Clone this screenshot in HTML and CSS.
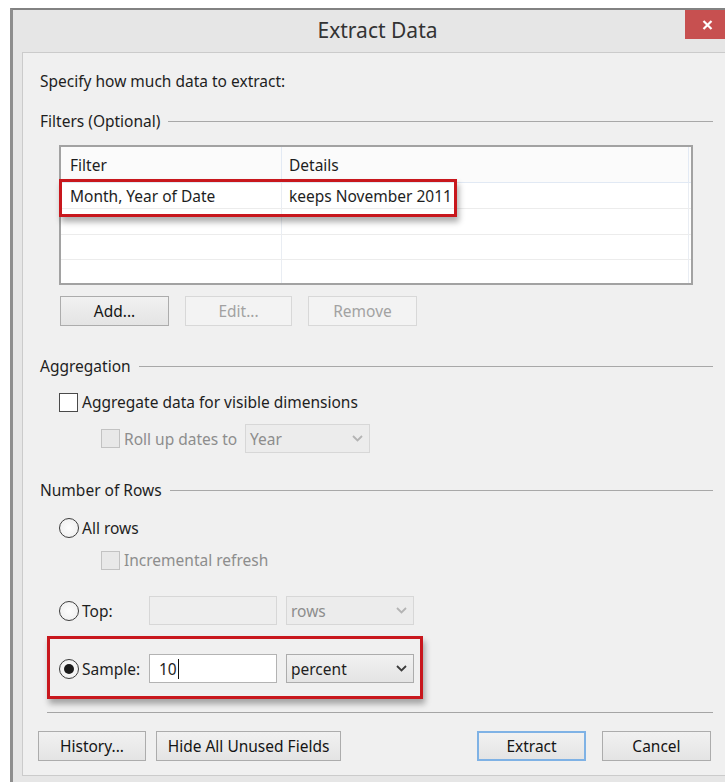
FILE: index.html
```html
<!DOCTYPE html>
<html lang="en">
<head>
<meta charset="utf-8">
<title>Extract Data</title>
<link rel="stylesheet" href="styles.css">
</head>
<body>
<div class="window">
  <div class="titlebar">
    <span class="title-spacer"></span>
    <div class="title">Extract Data</div>
    <button class="close" aria-label="Close">
      <svg width="11" height="10" viewBox="0 0 11 10"><path d="M1.5 1 L9.5 9 M9.5 1 L1.5 9" stroke="#fff" stroke-width="2.2" fill="none"/></svg>
    </button>
  </div>

  <div class="client">
    <p class="intro">Specify how much data to extract:</p>

    <div class="group-head"><span>Filters (Optional)</span><span class="rule"></span></div>

    <div class="filter-table">
      <div class="ft-grid">
        <div class="ft-head">Filter</div>
        <div class="ft-head">Details</div>
        <div class="ft-head ft-tail"></div>

        <div class="ft-cell">Month, Year of Date</div>
        <div class="ft-cell">keeps November 2011</div>
        <div class="ft-cell ft-tail"></div>

        <div class="ft-cell"></div><div class="ft-cell"></div><div class="ft-cell ft-tail"></div>
        <div class="ft-cell short"></div><div class="ft-cell short"></div><div class="ft-cell ft-tail short"></div>
        <div class="ft-cell last"></div><div class="ft-cell last"></div><div class="ft-cell ft-tail last"></div>
      </div>
      <div class="callout row-callout"></div>
    </div>

    <div class="filter-buttons">
      <button class="btn">Add...</button>
      <button class="btn edit" disabled>Edit...</button>
      <button class="btn" disabled>Remove</button>
    </div>

    <div class="group-head agg-head"><span>Aggregation</span><span class="rule"></span></div>

    <label class="check-row">
      <span class="checkbox"></span>
      <span>Aggregate data for visible dimensions</span>
    </label>

    <div class="rollup-row">
      <label class="rollup-label disabled">
        <span class="checkbox off"></span>
        <span>Roll up dates to</span>
      </label>
      <div class="select off year-select">
        <span>Year</span>
        <svg width="11" height="7" viewBox="0 0 11 7"><path d="M1 1 L5.5 5.5 L10 1" fill="none" stroke="#b4b4b4" stroke-width="1.8"/></svg>
      </div>
    </div>

    <div class="group-head rows-head"><span>Number of Rows</span><span class="rule"></span></div>

    <label class="radio-row all-rows">
      <span class="radio"></span>
      <span>All rows</span>
    </label>

    <label class="check-row sub disabled">
      <span class="checkbox off"></span>
      <span>Incremental refresh</span>
    </label>

    <div class="field-row top-row">
      <label class="radio-label">
        <span class="radio"></span>
        <span>Top:</span>
      </label>
      <div class="textbox off"></div>
      <div class="select off">
        <span>rows</span>
        <svg width="11" height="7" viewBox="0 0 11 7"><path d="M1 1 L5.5 5.5 L10 1" fill="none" stroke="#b4b4b4" stroke-width="1.8"/></svg>
      </div>
    </div>

    <div class="callout sample-box">
      <div class="field-row">
        <label class="radio-label">
          <span class="radio on"></span>
          <span>Sample:</span>
        </label>
        <div class="textbox"><span>10</span><span class="caret"></span></div>
        <div class="select">
          <span>percent</span>
          <svg width="11" height="7" viewBox="0 0 11 7"><path d="M1 1 L5.5 5.5 L10 1" fill="none" stroke="#3c3c3c" stroke-width="1.8"/></svg>
        </div>
      </div>
    </div>

    <div class="separator"></div>

    <div class="footer">
      <div class="footer-left">
        <button class="btn history">History...</button>
        <button class="btn hide-unused">Hide All Unused Fields</button>
      </div>
      <div class="footer-right">
        <button class="btn default">Extract</button>
        <button class="btn">Cancel</button>
      </div>
    </div>
  </div>
</div>
</body>
</html>
```

FILE: styles.css
```css
* { box-sizing: border-box; }

html, body {
  margin: 0;
  background: #ffffff;
  overflow: hidden;
}

body {
  width: 725px;
  height: 782px;
  font-family: "Noto Sans", "Open Sans", sans-serif;
  font-size: 15.5px;
  color: #1e1e1e;
}

button {
  font: inherit;
  color: inherit;
}

/* window frame */
.window {
  margin: 8px 0 0 10px;
  width: 732px;
  height: 800px;
  padding: 0 9px;
  background: #e6e6e6;
  border-top: 2px solid #828282;
  border-left: 3px solid #8e8e8e;
}

.titlebar {
  margin: 0 -9px;
  height: 42px;
  display: grid;
  grid-template-columns: 1fr auto 1fr;
}

.title {
  align-self: center;
  font-size: 21px;
  color: #333;
  padding-bottom: 2px;
}

.close {
  justify-self: end;
  width: 44px;
  height: 29px;
  margin-right: 13px;
  border: 0;
  padding: 0;
  background: #c75050;
  display: flex;
  align-items: center;
  justify-content: center;
}

/* client area */
.client {
  width: 708px;
  background: #f0f0f0;
  border: 1px solid #cbcbcb;
  border-right: 0;
  padding: 0 17px 14px;
}

.intro {
  margin: 18px 0 0;
  line-height: 20px;
}

.group-head {
  margin-top: 20px;
  height: 20px;
  display: flex;
  align-items: center;
  gap: 8px;
}
.group-head .rule {
  flex: 1;
  height: 1px;
  background: #a8a8a8;
  margin-top: 1px;
}
.agg-head { margin-top: 30px; }
.rows-head { margin-top: 27px; }

/* filter list */
.filter-table {
  position: relative;
  margin: 14px 0 0 19px;
  width: 634px;
  height: 140px;
  border: 2px solid #a2a2a2;
  background: #fff;
}
.ft-grid {
  display: grid;
  grid-template-columns: 221px 407px 1fr;
  grid-template-rows: 36px 26px 26px 25px 1fr;
  height: 100%;
}
.ft-head {
  background: #fbfbfb;
  border-bottom: 1px solid #e1e9f4;
  border-right: 1px solid #e3eaf4;
  padding: 5px 0 0 9px;
  line-height: 26px;
}
.ft-head:nth-child(2) { padding-left: 7px; }
.ft-cell {
  border-bottom: 1px solid #ececec;
  border-right: 1px solid #e9edf3;
  padding-left: 9px;
  line-height: 26px;
}
.ft-cell:nth-child(3n+2) { padding-left: 7px; }
.ft-cell.last { border-bottom: 0; }
.ft-tail { border-right: 0; padding: 0; }

.callout {
  border: 3px solid #c8171d;
  box-shadow: 2px 5px 6px rgba(0, 0, 0, 0.32);
}
.row-callout {
  position: absolute;
  left: -2px;
  top: 32px;
  width: 398px;
  height: 38px;
}

/* push buttons */
.btn {
  height: 30px;
  width: 109px;
  padding: 0;
  border: 1px solid #acacac;
  background: linear-gradient(#f1f1f1, #e4e4e4);
  color: #151515;
}
.btn:disabled {
  border-color: #d8d8d8;
  background: #f3f3f3;
  color: #a2a2a2;
}
.btn.default {
  border: 2px solid #7fb2e5;
}

.filter-buttons {
  margin: 11px 0 0 20px;
  display: flex;
  gap: 16px;
}
.filter-buttons .edit { width: 107px; }

/* check boxes and radios */
.checkbox {
  width: 19px;
  height: 19px;
  flex: none;
  background: #fff;
  border: 1px solid #4a4a4a;
}
.checkbox.off {
  background: #e8e8e8;
  border-color: #c2c2c2;
}

.radio {
  width: 20px;
  height: 20px;
  flex: none;
  border-radius: 50%;
  border: 1px solid #3d3d3d;
  background: radial-gradient(circle, #fdfdfd 0%, #ececec 100%);
  display: flex;
  align-items: center;
  justify-content: center;
}
.radio.on::after {
  content: "";
  width: 10px;
  height: 10px;
  border-radius: 50%;
  background: #1b1b1b;
}

.check-row {
  margin: 16px 0 0 19px;
  height: 20px;
  display: flex;
  align-items: center;
  gap: 4px;
}
.check-row.sub {
  margin: 12px 0 0 61px;
}
.disabled { color: #8d8d8d; }

.rollup-row {
  margin: 12px 0 0 61px;
  height: 29px;
  display: flex;
  align-items: center;
}
.rollup-label {
  width: 144px;
  display: flex;
  align-items: center;
  gap: 4px;
}

.radio-row {
  margin: 18px 0 0 19px;
  height: 20px;
  display: flex;
  align-items: center;
  gap: 3px;
}

.field-row {
  height: 29px;
  display: flex;
  align-items: center;
}
.top-row { margin: 26px 0 0 19px; }

.radio-label {
  width: 90px;
  display: flex;
  align-items: center;
  gap: 3px;
}

.textbox {
  width: 128px;
  height: 29px;
  background: #fff;
  border: 1px solid #b3b3b3;
  display: flex;
  align-items: center;
  padding-left: 9px;
}
.textbox.off {
  background: #eeeeee;
  border-color: #d7d7d7;
}
.caret {
  width: 1px;
  height: 20px;
  background: #111;
  margin-left: 1px;
}

.select {
  width: 128px;
  height: 29px;
  margin-left: 9px;
  border: 1px solid #acacac;
  background: linear-gradient(#f1f1f1, #e4e4e4);
  display: flex;
  align-items: center;
  justify-content: space-between;
  padding: 0 6px 0 4px;
}
.select.off {
  border-color: #d7d7d7;
  background: #ececec;
  color: #8d8d8d;
}
.year-select {
  width: 125px;
  margin-left: 0;
}

.sample-box {
  margin: 11px 0 0 7px;
  width: 376px;
  height: 63px;
  padding: 15px 0 0 9px;
}

.separator {
  margin: 13px 0 0 7px;
  height: 1px;
  background: #a5a5a5;
}

.footer {
  margin: 18px 0 0 -2px;
  display: flex;
  justify-content: space-between;
}
.footer-left,
.footer-right {
  display: flex;
  gap: 10px;
}
.footer-right { gap: 16px; margin-right: 2px; }
.history { width: 108px; }
.hide-unused { width: 185px; }
```
